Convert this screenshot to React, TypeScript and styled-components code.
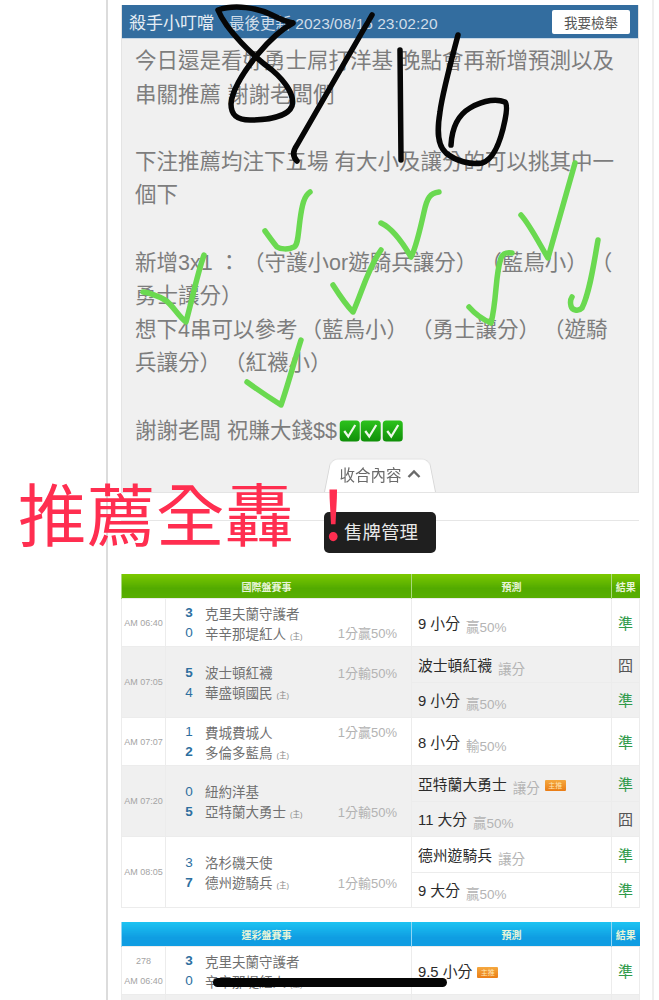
import React from "react";
import styled, { createGlobalStyle } from "styled-components";

const GlobalStyle = createGlobalStyle`
  html, body {
    margin: 0;
    background: #fff;
    font-family: "Liberation Sans", "Noto Sans CJK TC", sans-serif;
    text-spacing-trim: space-all;
  }
`;

const Screen = styled.div`
  position: relative;
  width: 659px;
  height: 1000px;
  overflow: hidden;
  background: #fff;
`;

const Page = styled.div`
  box-sizing: border-box;
  width: 548px;
  height: 1000px;
  margin-left: 106px;
  padding: 5px 13px 0 13px;
  border-left: 2px solid #dcdcdc;
  border-right: 2px solid #efefef;
`;

const Card = styled.section`
  background: #f0f0f0;
  border: 1px solid #e4e4e4;
  border-top: 0;
`;

const CardHeader = styled.header`
  display: flex;
  align-items: center;
  height: 33px;
  padding: 0 8px 0 7px;
  background: #336d9f;
  border-bottom: 1px solid #c5d6e6;
  color: #e6edf4;
`;

const Author = styled.span`
  font-size: 17px;
  margin-right: 15px;
`;

const Updated = styled.span`
  font-size: 15.5px;
  color: #d0dde9;
`;

const ReportButton = styled.button`
  margin-left: auto;
  width: 78px;
  height: 24px;
  padding: 0;
  border: 0;
  border-radius: 2px;
  background: #fff;
  color: #555;
  font: 13.5px "Liberation Sans", "Noto Sans CJK TC", sans-serif;
`;

const Body = styled.div`
  padding: 6px 0 0 13px;
  font-size: 21.5px;
  line-height: 33.6px;
  color: #7d7d7d;
`;

const Line = styled.div<{ $tight?: boolean }>`
  height: 33.6px;
  white-space: pre;
  display: flex;
  align-items: center;
  word-spacing: ${(p) => (p.$tight ? "-3px" : "0")};
`;

const EmojiRow = styled.span`
  display: inline-flex;
  margin-left: 2px;
`;

const TabRow = styled.div`
  display: flex;
  justify-content: center;
  margin-top: 5px;
`;

const Tab = styled.button`
  position: relative;
  z-index: 0;
  width: 112px;
  height: 39px;
  padding: 2px 0 0;
  border: 0;
  background: transparent;
  color: #6a6a6a;
  font: 15.5px "Liberation Sans", "Noto Sans CJK TC", sans-serif;
  display: flex;
  align-items: center;
  justify-content: center;
  gap: 5px;

  &::before {
    content: "";
    position: absolute;
    z-index: -1;
    inset: 0;
    background: #fff;
    border: 1px solid #d8d8d8;
    border-bottom: 0;
    border-radius: 9px 9px 0 0;
    transform: perspective(70px) rotateX(14deg);
    transform-origin: bottom;
  }
`;

const Divider = styled.hr`
  margin: 27px 0 53px;
  border: 0;
  border-top: 1px solid #e6e6e6;
`;

const Table = styled.table`
  width: 518px;
  table-layout: fixed;
  border-collapse: collapse;
  margin-bottom: 14px;
`;

const HeadCell = styled.th<{ $kind: "intl" | "sport" }>`
  height: 24px;
  padding: 0;
  font-size: 10px;
  font-weight: bold;
  color: #e8f5d8;
  background: ${(p) =>
    p.$kind === "intl"
      ? "linear-gradient(#7cc900, #52aa00 60%, #58ae02)"
      : "linear-gradient(#1cc4f2, #0f9de2 65%, #0f9de2)"};
  border-left: 1px solid ${(p) => (p.$kind === "intl" ? "#a9d97b" : "#8fd6f5")};
`;

const Row = styled.tr<{ $shade?: boolean }>`
  background: ${(p) => (p.$shade ? "#f0f0f0" : "#fff")};
`;

const TimeCell = styled.td`
  padding: 0;
  border: 1px solid #ececec;
  text-align: center;
  font-size: 9px;
  line-height: 20px;
  color: #a4a4a4;
`;

const Game = styled.td`
  padding: 0 0 0 13px;
  border: 1px solid #ececec;
  border-left: 0;
`;

const TeamLine = styled.div`
  display: grid;
  grid-template-columns: 26px 1fr 62px;
  align-items: center;
  height: 20px;
  padding-right: 14px;
`;

const Score = styled.span<{ $win?: boolean }>`
  font-size: 13.5px;
  font-weight: ${(p) => (p.$win ? "bold" : "normal")};
  color: #2d6f9f;
  text-align: center;
  padding-right: 6px;
`;

const TeamName = styled.span`
  font-size: 13.5px;
  color: #707070;
  white-space: nowrap;
`;

const Home = styled.small`
  margin-left: 4px;
  font-size: 7.5px;
  color: #888;
`;

const Handicap = styled.span`
  font-size: 13px;
  color: #b3b3b3;
  white-space: nowrap;
  text-align: right;
`;

const Pick = styled.td<{ $tall: boolean }>`
  height: ${(p) => (p.$tall ? "47px" : "34.5px")};
  padding: 0 0 0 6px;
  border: 1px solid #ececec;
  font-size: 14.8px;
  color: #2b2b2b;
  white-space: nowrap;
`;

const PickNote = styled.span`
  position: relative;
  top: 3px;
  margin-left: 6px;
  font-size: 13.5px;
  color: #b4b4b4;
`;

const Badge = styled.span`
  display: inline-block;
  width: 21px;
  height: 11px;
  margin-left: 5px;
  border-radius: 1px;
  background: linear-gradient(#f5a83f, #ea7d16);
  color: #ffe6b5;
  font-size: 7px;
  line-height: 11px;
  text-align: center;
  vertical-align: 2px;
`;

const Result = styled.td<{ $hit: boolean }>`
  padding: 0;
  border: 1px solid #ececec;
  text-align: center;
  font-size: 15px;
  color: ${(p) => (p.$hit ? "#2f9a4a" : "#555")};
`;

const BlankCell = styled.td`
  height: 47px;
  border: 1px solid #ececec;
`;

const Ink = styled.svg`
  position: absolute;
  inset: 0;
  pointer-events: none;
`;

const Stamp = styled.div`
  position: absolute;
  left: 18px;
  top: 488px;
  font-size: 68.5px;
  line-height: 60px;
  letter-spacing: 0.5px;
  color: #ff2e50;
  white-space: nowrap;
`;

const Bang = styled.span`
  margin-left: 5px;
`;

const Tooltip = styled.div`
  position: absolute;
  left: 324px;
  top: 512px;
  width: 112px;
  height: 41px;
  border-radius: 5px;
  background: #1f1f1f;
  color: #e8e8e8;
  font-size: 18.5px;
  line-height: 41px;
  text-align: center;
  padding-left: 2px;
  box-sizing: border-box;
`;

const HomeBar = styled.div`
  position: absolute;
  left: 213px;
  top: 978px;
  width: 234px;
  height: 9px;
  border-radius: 5px;
  background: #050505;
`;

const CheckEmoji = () => (
  <svg width="21.5" height="22" viewBox="0 0 21 22">
    <defs>
      <linearGradient id="tick" x1="0" y1="0" x2="0" y2="1">
        <stop offset="0" stopColor="#2cc21c" />
        <stop offset="1" stopColor="#0f8f08" />
      </linearGradient>
    </defs>
    <rect x="0.5" y="0.5" width="20" height="21" rx="3.5" fill="url(#tick)" />
    <path d="M5 11 L9 16.5 L16 5" fill="none" stroke="#eef8ea" strokeWidth="2.2" />
  </svg>
);

type Pred = { pick: string; note: string; badge?: boolean; hit: boolean };
type Match = {
  time: string;
  number?: string;
  home: [string, number, boolean];
  away: [string, number, boolean];
  handicap: string;
  handicapOnHome: boolean;
  preds: Pred[];
};

const intlMatches: Match[] = [
  {
    time: "AM 06:40",
    home: ["克里夫蘭守護者", 3, true],
    away: ["辛辛那堤紅人", 0, false],
    handicap: "1分贏50%",
    handicapOnHome: false,
    preds: [{ pick: "9 小分", note: "贏50%", hit: true }],
  },
  {
    time: "AM 07:05",
    home: ["波士頓紅襪", 5, true],
    away: ["華盛頓國民", 4, false],
    handicap: "1分輸50%",
    handicapOnHome: true,
    preds: [
      { pick: "波士頓紅襪", note: "讓分", hit: false },
      { pick: "9 小分", note: "贏50%", hit: true },
    ],
  },
  {
    time: "AM 07:07",
    home: ["費城費城人", 1, false],
    away: ["多倫多藍鳥", 2, true],
    handicap: "1分贏50%",
    handicapOnHome: true,
    preds: [{ pick: "8 小分", note: "輸50%", hit: true }],
  },
  {
    time: "AM 07:20",
    home: ["紐約洋基", 0, false],
    away: ["亞特蘭大勇士", 5, true],
    handicap: "1分輸50%",
    handicapOnHome: false,
    preds: [
      { pick: "亞特蘭大勇士", note: "讓分", badge: true, hit: true },
      { pick: "11 大分", note: "贏50%", hit: false },
    ],
  },
  {
    time: "AM 08:05",
    home: ["洛杉磯天使", 3, false],
    away: ["德州遊騎兵", 7, true],
    handicap: "1分輸50%",
    handicapOnHome: false,
    preds: [
      { pick: "德州遊騎兵", note: "讓分", hit: true },
      { pick: "9 大分", note: "贏50%", hit: true },
    ],
  },
];

const sportMatches: Match[] = [
  {
    time: "AM 06:40",
    number: "278",
    home: ["克里夫蘭守護者", 3, true],
    away: ["辛辛那堤紅人", 0, false],
    handicap: "",
    handicapOnHome: false,
    preds: [{ pick: "9.5 小分", note: "", badge: true, hit: true }],
  },
];

const MatchRows = ({ match, shade }: { match: Match; shade: boolean }) => {
  const span = match.preds.length;
  return (
    <>
      {match.preds.map((pred, i) => (
        <Row key={pred.pick} $shade={shade}>
          {i === 0 && (
            <>
              <TimeCell rowSpan={span}>
                {match.number && <div>{match.number}</div>}
                {match.time}
              </TimeCell>
              <Game rowSpan={span}>
                <TeamLine>
                  <Score $win={match.home[2]}>{match.home[1]}</Score>
                  <TeamName>{match.home[0]}</TeamName>
                  <Handicap>{match.handicapOnHome ? match.handicap : ""}</Handicap>
                </TeamLine>
                <TeamLine>
                  <Score $win={match.away[2]}>{match.away[1]}</Score>
                  <TeamName>
                    {match.away[0]}
                    <Home>(主)</Home>
                  </TeamName>
                  <Handicap>{match.handicapOnHome ? "" : match.handicap}</Handicap>
                </TeamLine>
              </Game>
            </>
          )}
          <Pick $tall={span === 1}>
            {pred.pick}
            {pred.note && <PickNote>{pred.note}</PickNote>}
            {pred.badge && <Badge>主推</Badge>}
          </Pick>
          <Result $hit={pred.hit}>{pred.hit ? "準" : "囧"}</Result>
        </Row>
      ))}
    </>
  );
};

const GameTable = ({
  kind,
  title,
  matches,
  trailingRow,
}: {
  kind: "intl" | "sport";
  title: string;
  matches: Match[];
  trailingRow?: boolean;
}) => (
  <Table>
    <colgroup>
      <col width="44" />
      <col width="246" />
      <col width="200" />
      <col width="28" />
    </colgroup>
    <thead>
      <tr>
        <HeadCell $kind={kind} colSpan={2}>
          {title}
        </HeadCell>
        <HeadCell $kind={kind}>預測</HeadCell>
        <HeadCell $kind={kind}>結果</HeadCell>
      </tr>
    </thead>
    <tbody>
      {matches.map((m, i) => (
        <MatchRows key={m.time} match={m} shade={i % 2 === 1} />
      ))}
      {trailingRow && (
        <Row $shade>
          <BlankCell />
          <BlankCell />
          <BlankCell />
          <BlankCell />
        </Row>
      )}
    </tbody>
  </Table>
);

// handwriting on top of the screenshot
const strokes = {
  black: [
    "M218 10 C235 4 258 8 272 15 C280 19 287 22 293 23 M218 10 C226 30 254 57 272 70 C286 82 295 96 292 106 C288 116 270 120 250 120 C238 120 231 116 231 104 C232 90 245 70 258 54 C268 42 280 30 293 23",
    "M372 15 L297 145 C292 152 293 157 297 161",
    "M400 50 L401 160",
    "M458 35 C450 65 442 95 440 112 C437 130 437 145 446 153 C456 161 470 165 482 163 C492 160 500 145 505 120 C507 110 507 104 505 102 C498 99 485 99 470 108 C458 115 452 127 451 145",
  ],
  green: [
    "M310 192 C304 196 302 205 300 220 C298 235 298 245 294 247 C288 250 280 249 277 247 C272 241 268 235 265 231",
    "M439 192 C430 193 427 198 424 212 C420 230 416 248 411 257 C404 245 392 228 381 223",
    "M575 163 C565 198 556 230 548 258 C540 245 530 225 521 215",
    "M598 240 C594 262 590 292 582 308 C578 312 572 310 571 306 C570 302 570 300 572 297",
    "M204 255 C197 275 192 300 186 322 C178 316 172 304 165 300 C158 296 150 293 143 292",
    "M381 250 C368 268 362 292 353 312 C346 305 340 296 333 285",
    "M512 253 C506 252 503 253 501 258 C495 275 497 300 491 323 C484 320 476 315 469 307",
    "M301 340 C294 362 288 385 281 405 C270 398 258 390 247 382",
  ],
};

export default function App() {
  return (
    <Screen>
      <GlobalStyle />
      <Page>
        <Card>
          <CardHeader>
            <Author>殺手小叮噹</Author>
            <Updated>最後更新 2023/08/16 23:02:20</Updated>
            <ReportButton>我要檢舉</ReportButton>
          </CardHeader>
          <Body>
            <Line>今日還是看好勇士屌打洋基 晚點會再新增預測以及</Line>
            <Line>串關推薦 謝謝老闆們</Line>
            <Line> </Line>
            <Line>下注推薦均注下五場 有大小及讓分的可以挑其中一</Line>
            <Line>個下</Line>
            <Line> </Line>
            <Line $tight>新增3x1  ： （守護小or遊騎兵讓分） （藍鳥小） （</Line>
            <Line>勇士讓分）</Line>
            <Line $tight>想下4串可以參考 （藍鳥小） （勇士讓分） （遊騎</Line>
            <Line $tight>兵讓分） （紅襪小）</Line>
            <Line> </Line>
            <Line>
              謝謝老闆 祝賺大錢$$
              <EmojiRow>
                <CheckEmoji />
                <CheckEmoji />
                <CheckEmoji />
              </EmojiRow>
            </Line>
          </Body>
          <TabRow>
            <Tab>
              收合內容
              <svg width="14" height="10" viewBox="0 0 14 10">
                <path d="M1.5 8 L7 2.5 L12.5 8" fill="none" stroke="#6a6a6a" strokeWidth="2.4" />
              </svg>
            </Tab>
          </TabRow>
        </Card>
        <Divider />
        <GameTable kind="intl" title="國際盤賽事" matches={intlMatches} />
        <GameTable kind="sport" title="運彩盤賽事" matches={sportMatches} trailingRow />
      </Page>
      <Ink width="659" height="1000" viewBox="0 0 659 1000" fill="none" strokeLinecap="round" strokeLinejoin="round">
        {strokes.black.map((d) => (
          <path key={d} d={d} stroke="#060606" strokeWidth="5.5" />
        ))}
        {strokes.green.map((d) => (
          <path key={d} d={d} stroke="#6ad950" strokeWidth="5.5" />
        ))}
      </Ink>
      <Tooltip>售牌管理</Tooltip>
      <Stamp>
        推薦全轟<Bang>！</Bang>
      </Stamp>
      <HomeBar />
    </Screen>
  );
}
